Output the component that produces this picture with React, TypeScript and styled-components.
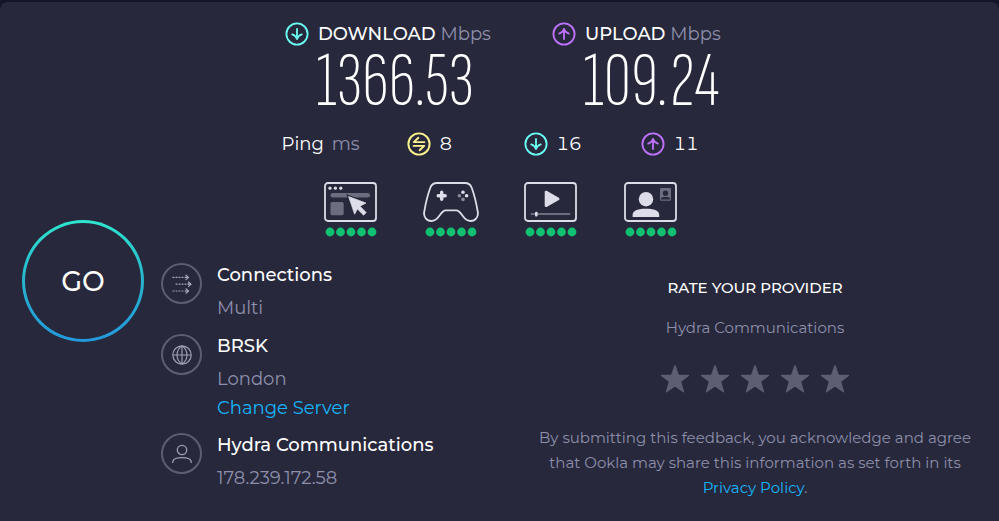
import React from "react";
import styled, { createGlobalStyle } from "styled-components";

const color = {
  page: "#141528",
  card: "#27283b",
  white: "#ffffff",
  muted: "#8e8fab",
  line: "#5d5e72",
  icon: "#dcdde8",
  dim: "#6c6d7f",
  link: "#17b5fb",
  cyan: "#6afff3",
  violet: "#bf71ff",
  yellow: "#fff38e",
  green: "#0fc171",
};

const GlobalStyle = createGlobalStyle`
  * { box-sizing: border-box; }
  body {
    margin: 0;
    background: ${color.page};
    color: ${color.white};
    font-family: Montserrat, Inter, "Open Sans", sans-serif;
    font-size: 18px;
  }
  h2, h3, p, dl, dt, dd, ul { margin: 0; padding: 0; }
  svg { display: block; flex: none; }
`;

const Card = styled.main`
  display: grid;
  grid-template-columns: 122px minmax(0, 1fr) minmax(0, 448px);
  column-gap: 17px;
  align-content: start;
  min-height: calc(100vh - 2px);
  margin-top: 2px;
  padding: 19px 20px 20px 22px;
  border-radius: 8px 8px 0 0;
  background: ${color.card};
`;

const Results = styled.section`
  grid-column: 1 / -1;
  display: flex;
  justify-content: center;
  gap: 60px;
  padding-left: 6px;
`;

const Result = styled.div<{ $width: number }>`
  width: ${(p) => p.$width}px;
`;

const ResultLabel = styled.h2`
  display: flex;
  align-items: center;
  gap: 9px;
  height: 26px;
  font-size: 18px;
  font-weight: 500;
  white-space: nowrap;
`;

const Unit = styled.span`
  color: ${color.muted};
  font-weight: 400;
`;

const ResultValue = styled.p`
  padding-left: 31px;
  font-family: "Sofia Sans Extra Condensed", "Roboto Condensed", Roboto, sans-serif;
  font-size: 77px;
  font-weight: 200;
  line-height: 70px;
  white-space: nowrap;
`;

const PingRow = styled.dl`
  grid-column: 1 / -1;
  display: grid;
  grid-template-columns: 125px 117px 117px 80px;
  justify-content: center;
  align-items: center;
  height: 40px;
  margin-top: 7px;
  padding-left: 1px;
  font-variant-numeric: tabular-nums;
`;

const PingLabel = styled.dt`
  display: flex;
  gap: 8px;
`;

const PingValue = styled.dd`
  display: flex;
  align-items: center;
  gap: 9px;
`;

const Activities = styled.ul`
  grid-column: 1 / -1;
  grid-row: 3;
  display: grid;
  grid-template-columns: repeat(4, 56px);
  justify-content: center;
  column-gap: 44px;
  height: 99px;
  padding-top: 18px;
  list-style: none;
`;

const Activity = styled.li`
  display: flex;
  flex-direction: column;
  align-items: center;
  gap: 5px;
`;

const GoButton = styled.button`
  grid-column: 1;
  grid-row: 3 / span 2;
  z-index: 1;
  width: 122px;
  height: 122px;
  margin-top: 56px;
  padding: 0;
  border: 3px solid transparent;
  border-radius: 50%;
  background:
    linear-gradient(${color.card}, ${color.card}) padding-box,
    linear-gradient(#2ee6cf, #27b4cd 50%, #2299dd) border-box;
  color: ${color.white};
  font: inherit;
  font-size: 27px;
  font-weight: 500;
  cursor: pointer;
`;

const Details = styled.dl`
  grid-column: 2;
  grid-row: 4;
  display: flex;
  flex-direction: column;
  gap: 6px;
`;

const Detail = styled.div`
  display: grid;
  grid-template-columns: 41px minmax(0, 1fr);
  column-gap: 15px;
`;

const DetailIcon = styled.span`
  display: grid;
  place-items: center;
  width: 41px;
  height: 41px;
  border: 2px solid ${color.line};
  border-radius: 50%;
`;

const DetailText = styled.div`
  dt {
    font-weight: 500;
    line-height: 25px;
    white-space: nowrap;
  }
  dd {
    line-height: 29px;
    color: ${color.muted};
  }
  dt + dd {
    padding-top: 6px;
    padding-bottom: 5px;
  }
  dd + dd {
    margin-top: -5px;
    padding-bottom: 4px;
  }
`;

const Link = styled.a`
  color: ${color.link};
  text-decoration: none;
`;

const Rating = styled.section`
  grid-column: 3;
  grid-row: 4;
  display: flex;
  flex-direction: column;
  align-items: center;
  padding-top: 12px;
  text-align: center;
  font-size: 15px;
  line-height: 25px;
  color: ${color.muted};
`;

const RatingTitle = styled.h3`
  margin-bottom: 15px;
  color: ${color.white};
  font-size: 15px;
  font-weight: 500;
`;

const Stars = styled.div`
  display: flex;
  gap: 10px;
  margin: 24px 0 31px;
`;

const StarButton = styled.button`
  width: 30px;
  height: 30px;
  padding: 0;
  border: 0;
  background: none;
  color: ${color.line};
  cursor: pointer;
`;

const Arrow = ({ up = false }: { up?: boolean }) => (
  <svg width="24" height="24" viewBox="0 0 24 24" fill="none" stroke={up ? color.violet : color.cyan} strokeWidth="1.8" strokeLinecap="round" strokeLinejoin="round" aria-hidden="true">
    <circle cx="12" cy="12" r="10.6" />
    <path d={up ? "M12 17V7M7.2 11.6C9.5 10.8 11.2 9.3 12 7C12.8 9.3 14.5 10.8 16.8 11.6" : "M12 7V17M7.2 12.4C9.5 13.2 11.2 14.7 12 17C12.8 14.7 14.5 13.2 16.8 12.4"} />
  </svg>
);

const Idle = () => (
  <svg width="24" height="24" viewBox="0 0 24 24" fill="none" stroke={color.yellow} strokeWidth="1.9" strokeLinecap="round" strokeLinejoin="round" aria-hidden="true">
    <circle cx="12" cy="12" r="10.6" />
    <path d="M17.4 10.1H6.8L11.4 5.8M6.6 13.9H17.2L12.6 18.2" />
  </svg>
);

const Dots = () => (
  <svg width="52" height="10" viewBox="0 0 52 10" fill={color.green} aria-label="5 out of 5" role="img">
    {[5, 15.5, 26, 36.5, 47].map((x) => (
      <circle key={x} cx={x} cy="5" r="4.4" />
    ))}
  </svg>
);

const Screen = () => <rect x="1" y="1" width="51" height="38" rx="3" fill="none" stroke={color.icon} strokeWidth="1.8" />;

const Browsing = () => (
  <svg width="53" height="40" viewBox="0 0 53 40" fill={color.icon} aria-hidden="true">
    <Screen />
    <circle cx="6" cy="6.2" r="1.6" />
    <circle cx="11.4" cy="6.2" r="1.6" />
    <circle cx="16.8" cy="6.2" r="1.6" />
    <rect x="6.5" y="11" width="39.5" height="4.6" rx="2.3" fill={color.dim} />
    <rect x="6.5" y="20" width="13.2" height="13.2" rx="1.6" fill={color.dim} />
    <path d="M24.6 14.6L42 21L36 24.2L42.2 30.6L39.6 33.2L33.4 27L30.6 32.2Z" stroke={color.card} strokeWidth="3" />
    <path d="M24.6 14.6L42 21L36 24.2L42.2 30.6L39.6 33.2L33.4 27L30.6 32.2Z" stroke={color.icon} strokeWidth="0.7" strokeLinejoin="round" />
  </svg>
);

const Gaming = () => (
  <svg width="56" height="40" viewBox="0 0 56 40" fill={color.icon} aria-hidden="true">
    <path d="M14 1H42Q46.8 1 48.6 5.5C51.2 12.5 53.5 22 54.8 30C55.6 34.5 52.5 39 47.6 39C44 39 41.8 36.8 39.8 34C37.8 31.2 36 28.4 33.2 28.4H22.8C20 28.4 18.2 31.2 16.2 34C14.2 36.8 12 39 8.4 39C3.5 39 .4 34.5 1.2 30C2.5 22 4.8 12.5 7.4 5.5Q9.2 1 14 1Z" fill="none" stroke={color.icon} strokeWidth="1.8" />
    <path d="M18.7 10.2V17.2M15.2 13.7H22.2" stroke={color.icon} strokeWidth="3.4" strokeLinecap="round" />
    <circle cx="40" cy="10.2" r="1.8" />
    <circle cx="43.6" cy="13.8" r="1.8" />
    <circle cx="36.4" cy="13.8" r="1.8" fill="#8a8b9c" />
    <circle cx="40" cy="17.4" r="1.8" fill="#8a8b9c" />
  </svg>
);

const Streaming = () => (
  <svg width="53" height="40" viewBox="0 0 53 40" fill={color.icon} aria-hidden="true">
    <Screen />
    <path d="M22 10V23.8L34.2 16.9Z" stroke={color.icon} strokeWidth="2.6" strokeLinejoin="round" />
    <path d="M7.5 32H45.5" stroke={color.dim} strokeWidth="2" strokeLinecap="round" />
    <rect x="11" y="29.8" width="2.6" height="4.6" rx="1" />
  </svg>
);

const VideoCall = () => (
  <svg width="53" height="40" viewBox="0 0 53 40" fill={color.icon} aria-hidden="true">
    <Screen />
    <circle cx="22" cy="17.2" r="7.2" />
    <path d="M8.6 35V33C8.6 29.4 12 26.8 22 26.8S35.2 29.4 35.2 33V35Z" />
    <rect x="36" y="6" width="11" height="12.8" rx="1" fill={color.dim} />
    <circle cx="41.5" cy="11.2" r="2.7" fill={color.card} />
    <path d="M36.8 17.4C36.8 15.6 38.4 15 41.5 15S46.2 15.6 46.2 17.4Z" fill={color.card} />
  </svg>
);

const Connections = () => (
  <svg width="20" height="20" viewBox="0 0 20 20" fill="none" stroke="#a5a6ba" strokeWidth="1.2" strokeLinecap="round" strokeLinejoin="round" aria-hidden="true">
    <path d="M1 3.4H14M4 10.2H17M1 17H14" strokeDasharray="1 2" />
    <path d="M14 1.2L16.5 3.4L14 5.6M16.5 8L19 10.2L16.5 12.4M14 14.8L16.5 17L14 19.2M14 3.4H16M16.5 10.2H18.5M14 17H16" />
  </svg>
);

const Globe = () => (
  <svg width="20" height="20" viewBox="0 0 20 20" fill="none" stroke="#9c9db2" strokeWidth="1.2" aria-hidden="true">
    <circle cx="10" cy="10" r="9.2" />
    <path d="M.8 10H19.2M10 .8V19.2M10 .8C3.4 5.3 3.4 14.7 10 19.2M10 .8C16.6 5.3 16.6 14.7 10 19.2" />
  </svg>
);

const Person = () => (
  <svg width="20" height="20" viewBox="0 0 20 20" fill="none" stroke="#9c9db2" strokeWidth="1.3" strokeLinecap="round" aria-hidden="true">
    <circle cx="10" cy="6" r="4.7" />
    <path d="M.8 18.4V17.6C1.2 14.6 4.5 13.6 10 13.6S18.8 14.6 19.2 17.6V18.4" />
  </svg>
);

const Star = () => (
  <svg width="30" height="30" viewBox="0 0 30 30" fill="currentColor" stroke="currentColor" strokeWidth="1.4" strokeLinejoin="round" aria-hidden="true">
    <path d="M15 1.8L18.4 11.4H28.4L20.5 17.5L23.4 27.8L15 21.7L6.6 27.8L9.5 17.5L1.6 11.4H11.6Z" />
  </svg>
);

const activities = [
  { name: "Web browsing", Icon: Browsing },
  { name: "Gaming", Icon: Gaming },
  { name: "Video streaming", Icon: Streaming },
  { name: "Video chat", Icon: VideoCall },
];

export default function App() {
  return (
    <>
      <GlobalStyle />
      <Card>
        <Results>
          <Result $width={207}>
            <ResultLabel>
              <Arrow />
              <span>DOWNLOAD <Unit>Mbps</Unit></span>
            </ResultLabel>
            <ResultValue>1366.53</ResultValue>
          </Result>
          <Result $width={170}>
            <ResultLabel>
              <Arrow up />
              <span>UPLOAD <Unit>Mbps</Unit></span>
            </ResultLabel>
            <ResultValue>109.24</ResultValue>
          </Result>
        </Results>

        <PingRow>
          <PingLabel>Ping <Unit>ms</Unit></PingLabel>
          <PingValue><Idle />8</PingValue>
          <PingValue><Arrow />16</PingValue>
          <PingValue><Arrow up />11</PingValue>
        </PingRow>

        <Activities>
          {activities.map(({ name, Icon }) => (
            <Activity key={name} aria-label={name}>
              <Icon />
              <Dots />
            </Activity>
          ))}
        </Activities>

        <GoButton type="button">GO</GoButton>

        <Details>
          <Detail>
            <DetailIcon><Connections /></DetailIcon>
            <DetailText>
              <dt>Connections</dt>
              <dd>Multi</dd>
            </DetailText>
          </Detail>
          <Detail>
            <DetailIcon><Globe /></DetailIcon>
            <DetailText>
              <dt>BRSK</dt>
              <dd>London</dd>
              <dd><Link href="#servers">Change Server</Link></dd>
            </DetailText>
          </Detail>
          <Detail>
            <DetailIcon><Person /></DetailIcon>
            <DetailText>
              <dt>Hydra Communications</dt>
              <dd>178.239.172.58</dd>
            </DetailText>
          </Detail>
        </Details>

        <Rating>
          <RatingTitle>RATE YOUR PROVIDER</RatingTitle>
          <p>Hydra Communications</p>
          <Stars role="group" aria-label="Rating">
            {[1, 2, 3, 4, 5].map((n) => (
              <StarButton key={n} type="button" aria-label={`${n} of 5 stars`}>
                <Star />
              </StarButton>
            ))}
          </Stars>
          <p>
            By submitting this feedback, you acknowledge and agree that Ookla may share this information as set forth in its{" "}
            <Link href="#privacy">Privacy Policy</Link>.
          </p>
        </Rating>
      </Card>
    </>
  );
}
